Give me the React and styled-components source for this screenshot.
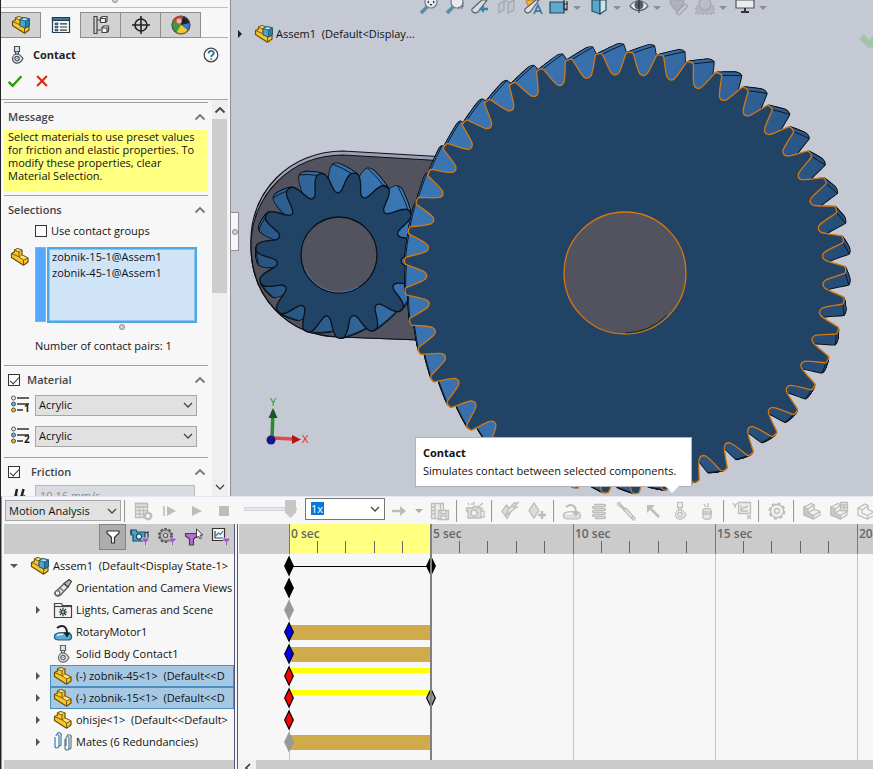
import React from "react";
import styled, { createGlobalStyle, css } from "styled-components";

const GlobalStyle = createGlobalStyle`
  * { box-sizing: border-box; }
  body {
    margin: 0;
    background: #f7f7f7;
    color: #111;
    font: 11px/16px "Open Sans", "Noto Sans", sans-serif;
  }
  button, input, select { font: inherit; color: inherit; margin: 0; }
  button { padding: 0; border: 0; background: none; }
  h2, h3, p, ul { margin: 0; padding: 0; font: inherit; }
  ul { list-style: none; }
  svg { display: block; flex: none; }
`;

/* ---------- layout ---------- */

const Window = styled.div`
  display: flex;
  flex-direction: column;
  height: 100vh;
  overflow: hidden;
  border-left: 1px solid #222228;
`;

const Workspace = styled.main`
  display: flex;
  flex: 1;
  min-height: 0;
`;

const Sidebar = styled.aside`
  display: flex;
  flex-direction: column;
  flex: none;
  width: 230px;
  background: #f7f7f7;
  border-right: 1px solid #8d8f99;
`;

const Grip = styled.div`
  display: flex;
  justify-content: center;
  height: 8px;
  margin-right: 2px;
  border-bottom: 1px solid #c0c0c0;
`;

const Tabs = styled.nav`
  display: flex;
  height: 26px;
  margin: 4px 2px 0 0;
  border-bottom: 1px solid #b0b0b0;
`;

const Tab = styled.button`
  display: flex;
  align-items: center;
  justify-content: center;
  width: 40px;
  height: 26px;
  background: ${(p) => (p.$active ? "#f7f7f7" : "#d2d2d2")};
  border: solid #8e8e8e;
  border-width: ${(p) => (p.$active ? "0" : "1px 1px 1px 0")};
  border-right-width: 1px;
`;

const PanelHeader = styled.header`
  padding: 8px 9px 0 6px;
  height: 62px;
  margin-right: 2px;
  border-bottom: 1px solid #a8a8a8;
`;

const TitleRow = styled.div`
  display: flex;
  align-items: center;
  height: 18px;
  gap: 6px;
`;

const PanelTitle = styled.h2`
  flex: 1;
  font-size: 11px;
  font-weight: 700;
  color: #222;
`;

const ActionRow = styled.div`
  display: flex;
  gap: 12px;
  margin-top: 8px;
`;

const PanelScroll = styled.div`
  display: flex;
  flex: 1;
  min-height: 0;
  padding-right: 2px;
`;

const PanelBody = styled.div`
  flex: 1;
  min-width: 0;
  overflow: hidden;
  padding: 2px 4px 0 3px;
`;

const Section = styled.section`
  border-top: 1px solid #a0a0a0;
  padding-bottom: ${(p) => p.$bottom || 3}px;
`;

const SectionHead = styled.div`
  display: flex;
  align-items: center;
  height: 27px;
  padding: 0 2px 0 4px;
  margin-bottom: ${(p) => p.$gap || 0}px;
  font-weight: 600;
  color: #444;
  > :last-child { margin-left: auto; }
`;

const Note = styled.p`
  height: 62px;
  padding: 0 4px;
  background: #ffff80;
  line-height: 13px;
`;

const FieldRow = styled.div`
  display: grid;
  grid-template-columns: 31px 162px;
  align-items: ${(p) => p.$align || "center"};
  margin-bottom: ${(p) => p.$gap || 0}px;
`;

const Lead = styled.span`
  padding-left: 6px;
`;

const CheckLabel = styled.label`
  display: flex;
  align-items: center;
  gap: ${(p) => p.$gap || 4}px;
`;

const TickBox = styled.input.attrs({ type: "checkbox" })`
  appearance: none;
  flex: none;
  width: 12px;
  height: 12px;
  border: 1px solid #333;
  background: #fff;
  &:checked::after {
    content: "";
    display: block;
    width: 8px;
    height: 4px;
    margin: 2px 1px;
    border: solid #333;
    border-width: 0 0 1px 1px;
    transform: rotate(-48deg);
  }
`;

const Selection = styled.div`
  display: flex;
  gap: 1px;
`;

const ColorStrip = styled.span`
  width: 11px;
  height: 75px;
  background: #56a8ff;
  border: 1px solid #8eaed0;
`;

const PickList = styled.ul`
  flex: 1;
  height: 76px;
  padding: 0 3px;
  border: 2px solid #4ea9e0;
  box-shadow: inset 0 0 0 1px #8cc3ea;
  background: #d0e4f7;
`;

const Select = styled.select`
  appearance: none;
  height: 21px;
  width: 100%;
  padding: 0 22px 0 3px;
  border: 1px solid #a6a6a6;
  border-radius: 0;
  background: #e1e1e1;
  color: #111;
`;

const SelectWrap = styled.span`
  display: grid;
  flex: none;
  align-items: center;
  width: ${(p) => p.$width || "100%"};
  > * { grid-area: 1 / 1; }
  > svg { justify-self: end; margin-right: 3px; pointer-events: none; }
`;

const Velocity = styled.input`
  height: 21px;
  width: 160px;
  padding: 0 4px;
  border: 1px solid #b8b8b8;
  background: #d8dce2;
  color: #8d8d8d;
`;

const Dot = styled.span`
  flex: none;
  width: 6px;
  height: 6px;
  border-radius: 50%;
  border: 1px solid #8a8a8a;
  background: #d4d4d4;
  margin: ${(p) => p.$margin || 0};
`;

const PairCount = styled.p`
  padding: 8px 0 0 31px;
  height: 32px;
`;

const ScrollTrack = styled.div`
  display: flex;
  flex-direction: column;
  width: 16px;
  padding-right: 1px;
  background: #efefef;
`;

const ScrollButton = styled.button`
  display: grid;
  place-items: center;
  height: 19px;
`;

const ScrollThumb = styled.div`
  flex: 0 0 174px;
  margin-bottom: auto;
  background: #cdcdcd;
`;

/* ---------- graphics area ---------- */

const Viewport = styled.section`
  position: relative;
  flex: 1;
  min-width: 0;
  overflow: hidden;
  background: #c5c9d4;
`;

const Scene = styled.svg`
  width: 100%;
  height: 100%;
`;

const ViewTools = styled.div`
  position: absolute;
  top: 0;
  left: 187px;
  display: flex;
  gap: 4px;
`;

const ViewTool = styled.button`
  display: flex;
  height: 16px;
  align-items: center;
`;

const Caret = styled.span`
  margin: ${(p) => p.$margin || "0 3px"};
  border: solid transparent;
  border-width: 4px 4px 0;
  border-top-color: ${(p) => p.$color || "#8d8f98"};
`;

const FlyoutTree = styled.button`
  position: absolute;
  left: 5px;
  top: 24px;
  display: flex;
  align-items: center;
`;

const FlyoutLabel = styled.span`
  display: flex;
  align-items: center;
  gap: 2px;
  padding-left: 10px;
`;

const PanelHandle = styled.button`
  position: absolute;
  left: 0;
  top: 212px;
  display: grid;
  place-items: center;
  width: 8px;
  height: 39px;
  background: #f7f7f7;
  border: 1px solid #8d8f99;
  border-left: 0;
`;

const Tip = styled.div`
  position: absolute;
  left: 184px;
  bottom: 9px;
  min-width: 277px;
  padding: 6px 7px 7px;
  height: 50px;
  background: #fff;
  border: 1px solid #b0b3bb;
  line-height: 18px;
  white-space: nowrap;
  &::after {
    content: "";
    position: absolute;
    right: 12px;
    top: 100%;
    border: solid transparent;
    border-width: 7px 7px 0;
    border-top-color: #fff;
  }
`;

/* ---------- motion study ---------- */

const MotionStudy = styled.section`
  flex: none;
  border-top: 1px solid #e6e6f2;
  border-left: 1px solid #7f9497;
`;

const MotionBar = styled.div`
  display: flex;
  align-items: center;
  height: 27px;
  padding-left: 3px;
  overflow: hidden;
  background: #f7f7f7;
`;

const ToolButton = styled.button`
  display: grid;
  place-items: center;
  flex: none;
  width: ${(p) => p.$width || 27}px;
  height: 24px;
`;

const Divider = styled.span`
  flex: none;
  width: 2px;
  height: 22px;
  margin: 0 3px;
  background: #9a9a9a;
  border-right: 1px solid #f0f0f0;
`;

const Speed = styled.input.attrs({ type: "range" })`
  appearance: none;
  flex: none;
  width: 53px;
  height: 20px;
  margin: 0 8px 3px 7px;
  background: none;
  &::-webkit-slider-runnable-track {
    height: 4px;
    background: #e4e8e8;
    border: 1px solid #d2d6d6;
  }
  &::-webkit-slider-thumb {
    appearance: none;
    width: 11px;
    height: 18px;
    margin-top: -8px;
    background: #c6c6c6;
    clip-path: polygon(0 0, 100% 0, 100% 70%, 50% 100%, 0 70%);
  }
`;

const Combo = styled.span`
  display: flex;
  align-items: center;
  justify-content: space-between;
  flex: none;
  width: 80px;
  height: 22px;
  margin-bottom: 4px;
  padding: 0 3px 0 5px;
  background: #fff;
  border: 1px solid #777;
`;

const ComboText = styled.input`
  width: 13px;
  height: 13px;
  padding: 0;
  border: 0;
  background: #0878d8;
  color: #fff;
  line-height: 13px;
`;

const StudyBody = styled.div`
  display: grid;
  grid-template-columns: 232px 5px minmax(0, 1fr);
`;

const TreePane = styled.div`
  padding-left: 2px;
  overflow: hidden;
`;

const FilterBar = styled.div`
  display: flex;
  justify-content: flex-end;
  height: 30px;
  background: #cbcbcb;
`;

const FilterButton = styled.button`
  display: grid;
  place-items: center;
  width: 27px;
  height: 26px;
  ${(p) => p.$on && css`
    background: #adadad;
    border: 1px solid #858585;
  `}
`;

const Tree = styled.ul`
  height: 206px;
  padding-top: 1px;
  overflow: hidden;
`;

const TreeRow = styled.li`
  display: flex;
  align-items: center;
  height: 22px;
  padding-left: ${(p) => (p.$root ? 5 : 29)}px;
  white-space: pre;
`;

const Twisty = styled.button`
  display: grid;
  place-items: center;
  flex: none;
  width: 10px;
  height: 16px;
  visibility: ${(p) => (p.$hidden ? "hidden" : "visible")};
`;

const NodeLabel = styled.span`
  display: flex;
  align-items: center;
  gap: 3px;
  flex: 1 0 auto;
  height: 22px;
  margin-left: ${(p) => (p.$root ? 8 : 7)}px;
  padding-left: 2px;
  border: 1px solid transparent;
  ${(p) => p.$selected && css`
    background: #a6c8e3;
    border-color: #4a8fbd;
  `}
`;

const BottomBar = styled.div`
  display: flex;
  align-items: center;
  height: 9px;
  overflow: hidden;
  background: #cbcbcb;
`;

const ScrollCorner = styled.button`
  display: grid;
  place-items: center;
  flex: none;
  width: 17px;
  height: 9px;
  background: #f0f0f0;
`;

const Splitter = styled.div`
  background: #f7f7f7;
  border: solid #55557c;
  border-width: 0 1px;
  margin-right: 1px;
`;

const Timeline = styled.div`
  position: relative;
  overflow: hidden;
`;

const Ruler = styled.div`
  display: flex;
  height: 30px;
  padding-left: 50px;
  background: #cbcbcb;
  color: #666;
  font-size: 12px;
  font-weight: 600;
`;

const Span = styled.div`
  flex: none;
  display: grid;
  grid-template-columns: repeat(5, 1fr);
  grid-template-rows: 14px 15px;
  width: 142px;
  height: 30px;
  border-left: 1px solid #777;
  ${(p) => p.$active && css`
    background: #ffff80;
  `}
`;

const SpanLabel = styled.span`
  grid-column: 1 / -1;
  padding: 2px 0 0 1px;
  line-height: 16px;
`;

const Tick = styled.i`
  margin-top: 3px;
  border-right: 1px solid #666;
  &:last-child { border: 0; }
`;

const Tracks = styled.div`
  height: 206px;
  padding: 1px 0 0 50px;
  background:
    repeating-linear-gradient(90deg, #c4c4c4 0 1px, transparent 1px 142px) 50px 0 no-repeat,
    #f7f7f7;
`;

const Track = styled.div`
  position: relative;
  display: flex;
  align-items: ${(p) => (p.$kind === "thin" ? "flex-start" : "center")};
  height: 22px;
`;

const Bar = styled.div`
  width: 142px;
  height: ${(p) => ({ full: 15, thin: 5, line: 1 })[p.$kind]}px;
  margin-top: ${(p) => (p.$kind === "thin" ? 3 : 0)}px;
  background: ${(p) => ({ full: "#cfab4b", thin: "#ffff00", line: "#000" })[p.$kind]};
`;

const Key = styled.svg`
  position: absolute;
  top: 1px;
  left: ${(p) => (p.$end ? 137 : -5)}px;
`;

const Playhead = styled.div`
  position: absolute;
  left: 191px;
  top: 0;
  bottom: 9px;
  width: 2px;
  background: #808080;
`;

/* ---------- icons ---------- */

const Icon = ({ size = 20, box = "0 0 20 20", h, children }) => (
  <svg width={size} height={h || size} viewBox={box} fill="none" stroke="#444" strokeWidth="1.2" aria-hidden="true">
    {children}
  </svg>
);

const Part = ({ cube }) => (
  <Icon>
    <path d="M1.500 6.500l3-1.500V3l3-1.500L12 3v5l6 3v4l-4.500 3.200L1.500 10.500z" fill="#f7c72a" stroke="#6b4d0c" strokeLinejoin="round" />
    <path d="M4.500 3.200L9 4.800v5l4.500 3v5M1.500 6.500L9 9.800M13.500 12.800L18 11" stroke="#6b4d0c" strokeWidth=".9" />
    <path d="M4.500 3.200L7.500 1.600 12 3 9 4.700zM9 9.800L12 8l6 3-4.500 1.800z" fill="#ffe682" stroke="#6b4d0c" strokeWidth=".6" />
    {cube && (
      <g stroke="#1f5674" strokeWidth=".9" strokeLinejoin="round">
        <path d="M9 4.500l4-2 5.500 1.500v6.500l-4 2.500L9 11z" fill="#4fa3cc" />
        <path d="M9 4.500l4-2 5.500 1.500-4 2z" fill="#b9e2f4" />
        <path d="M14.500 6l4-2v6.500l-4 2.500z" fill="#2b7fae" />
      </g>
    )}
  </Icon>
);

const ContactIcon = ({ c = "#4a4f5c", f = "#dfe3ea" }) => (
  <Icon>
    <path d="M7.500 1.500h5v5h-5zM8.500 6.500h3V9h-3z" fill={f} stroke={c} />
    <path d="M5.500 13.500c0-2.500 2-4.500 4.500-4.500 2.500 0 4 1.500 6 4.500-1.500 3-3.500 4.700-6 4.700s-4.500-2-4.500-4.700z" fill={f} stroke={c} />
    <circle cx="10" cy="13.500" r="2.200" fill="#fff" stroke={c} />
    <circle cx="10" cy="13.500" r=".7" fill={c} stroke="none" />
  </Icon>
);

const MotorIcon = ({ grey }) => (
  <Icon>
    <path d="M1.500 14c0-2.200 3-3.500 8.500-3.500s8.500 1.300 8.500 3.500v1.500c0 1.500-2 2.500-4 2.500H6c-3 0-4.500-1-4.500-2.500z" fill={grey ? "#dedede" : "#58aed8"} stroke={grey ? "#bcbcbc" : "#235a78"} />
    <path d="M4 13.500c2-1 4-1.200 6-1.200" stroke="#fff" />
    <path d="M4 6c5-4 10-2 10 5.500" stroke={grey ? "#bbb" : "#222"} strokeWidth="2" />
    <path d="M10.500 10.500h7L14 15.500z" fill={grey ? "#bbb" : "#222"} stroke="none" />
  </Icon>
);

const Chevron = ({ up, color = "#444", size = 12 }) => (
  <svg width={size} height={size} viewBox="0 0 12 12" fill="none" stroke={color} strokeWidth={up ? 1.8 : 1.3} aria-hidden="true">
    <path d={up ? "M1.500 8.500L6 4l4.500 4.500" : "M2 4l4 4 4-4"} />
  </svg>
);

const Triangle = ({ open, color = "#555" }) => (
  <svg width="8" height="8" viewBox="0 0 8 8" aria-hidden="true">
    <path d={open ? "M0 2h8L4 6z" : "M2 0l4 4-4 4z"} fill={color} />
  </svg>
);

const PropertyIcon = () => (
  <Icon>
    <path d="M1.500 2.500h17v15h-17z" fill="#f4f8fa" stroke="#223c4c" />
    <path d="M1.500 2.500h17v3h-17z" fill="#2c7aa5" stroke="#223c4c" />
    <path d="M4 8h3v1.500H4zM4 11.200h3v1.500H4zM4 14.400h3v1.500H4z" fill="#3e98c5" stroke="#234" strokeWidth=".7" />
    <path d="M9 8.800h7M9 12h7M9 15.200h7" stroke="#333" />
  </Icon>
);

const ConfigIcon = () => (
  <Icon>
    <path d="M3 1.500h3v17H3zM6 5h4M6 15h4" stroke="#444" />
    <path d="M9.500 3l2-1.500h4.500V6l-1.500 1.500H9.500zM11 12.500l2-1.500h4.500v5L16 17.500h-5z" fill="#f4f4f4" />
    <path d="M9.500 3.500h5v4M11 13h5v4" />
  </Icon>
);

const TargetIcon = () => (
  <Icon>
    <circle cx="10" cy="10" r="6" stroke="#222" strokeWidth="1.600" />
    <path d="M10 1v18M1 10h18" stroke="#222" strokeWidth="1.600" />
  </Icon>
);

const BallIcon = () => (
  <Icon>
    <circle cx="10" cy="10" r="9" fill="#3a78d0" />
    <path d="M10 10L2 5.500A9 9 0 0 1 12 1.200z" fill="#e2432d" stroke="none" />
    <path d="M10 10l2-8.800A9 9 0 0 1 18.500 8z" fill="#222" stroke="none" />
    <path d="M10 10L2 5.500A9 9 0 0 0 5.500 17.500z" fill="#3f9a3a" stroke="none" />
    <path d="M10 10l-4.500 7.500A9 9 0 0 0 17 15.500z" fill="#f5c92c" stroke="none" />
    <circle cx="8" cy="6" r="2.500" fill="#fff" opacity=".6" stroke="none" />
    <circle cx="10" cy="10" r="8.700" stroke="#555" strokeWidth=".8" />
  </Icon>
);

const MaterialIcon = ({ n }) => (
  <svg width="22" height="22" viewBox="0 0 22 22" aria-hidden="true">
    <path d="M7 4h12M7 10h12M7 16h6" stroke="#333" strokeWidth="1.600" />
    <g stroke="#444" strokeWidth=".9">
      <circle cx="3.500" cy="4" r="2" fill="#eee" />
      <circle cx="3.500" cy="10" r="2" fill="#5fb4dc" />
      <circle cx="3.500" cy="16" r="2" fill="#f2b90d" />
    </g>
    <text x="14" y="18" fontSize="10" fontWeight="700" fill="#222">{n}</text>
  </svg>
);

const Funnel = ({ fill = "#fff", stroke = "#333" }) => (
  <Icon>
    <path d="M4 4h12v2l-4.500 4.500V16h-3v-5.500L4 6z" fill={fill} stroke={stroke} strokeLinejoin="round" />
  </Icon>
);

const MiniFunnel = () => <path d="M12 11h7v2l-2.500 2v4h-2v-4L12 13z" fill="#a45cc0" stroke="#fff" strokeWidth=".5" />;

const filterIcons = {
  "Filter animated": (
    <Icon>
      <path d="M1 3h5l1 2h8v9H3V8H1z" fill="#4aa3c9" stroke="#174c66" />
      <circle cx="9" cy="9.500" r="2.600" fill="#e8f4fa" stroke="#174c66" />
      <path d="M15 6l3-1v6M1 3v4" stroke="#333" />
      <MiniFunnel />
    </Icon>
  ),
  "Filter driving": (
    <Icon>
      <circle cx="8.500" cy="8.500" r="6.500" fill="#b9b9b9" stroke="#555" strokeWidth="2" strokeDasharray="2.500 1.600" />
      <circle cx="8.500" cy="8.500" r="5.500" fill="#b9b9b9" stroke="#666" />
      <circle cx="8.500" cy="8.500" r="2" fill="#eee" stroke="#555" />
      <MiniFunnel />
    </Icon>
  ),
  "Filter selected": (
    <Icon>
      <path d="M1.500 6.500h12v2.500L9.500 12v6h-4v-6l-4-3z" fill="#b06fd0" stroke="#5b2a7a" />
      <path d="M12.500 2v9l2-2 1.500 3 1.500-1-1.500-3h3z" fill="#fff" stroke="#333" strokeWidth=".9" />
    </Icon>
  ),
  "Filter results": (
    <Icon>
      <path d="M1.500 1.500h12v12h-12z" fill="#f4f6f7" stroke="#333" />
      <path d="M4 4v7h8" />
      <path d="M4.500 9l3-3 2 1.500L12 4" stroke="#2a7da8" />
      <MiniFunnel />
    </Icon>
  ),
};

const CameraPen = () => (
  <Icon>
    <path d="M2 14.500l9-9 4 3.500-8 8.500c-2 1.500-6 0-5-3z" fill="#e4e4e4" stroke="#555" />
    <path d="M11 5.500l5-4 2.500 2-3.500 5.500z" fill="#b5b5b5" stroke="#444" />
    <circle cx="4.500" cy="15" r="2.300" fill="#fff" stroke="#666" />
    <path d="M7 10l4 3.500" stroke="#777" />
  </Icon>
);

const LightsIcon = () => (
  <Icon>
    <path d="M1.500 3.500h7l1 2h9v12h-17z" fill="#f3f3f3" stroke="#444" />
    <path d="M1.500 6.500h17" />
    <circle cx="10" cy="12" r="2" fill="#79c3e6" stroke="#222" />
    <path d="M10 7.800v1.500M10 14.700v1.500M5.800 12h1.500M12.700 12h1.500M7 9l1 1M13 9l-1 1M7 15l1-1M13 15l-1-1" stroke="#222" />
  </Icon>
);

const MatesIcon = () => (
  <Icon>
    <path d="M2 5v9a2 2 0 0 0 4 0V4a1.500 1.500 0 0 0-3 0M8 3v10a2 2 0 0 1-2 1M8 13V4a2 2 0 0 0-4-2" stroke="#3c81a6" />
    <path d="M12 7v9a2 2 0 0 0 4 0V6a1.500 1.500 0 0 0-3 0v8M18 5v10a2 2 0 0 1-2 2M18 6a2 2 0 0 0-4-2" stroke="#5d7c8c" />
  </Icon>
);

const G = "#bdbdbd";
const g = "#dcdcdc";
const Dull = ({ children }) => (
  <svg width="20" height="20" viewBox="0 0 20 20" fill="none" stroke={G} strokeWidth="1.300" aria-hidden="true">{children}</svg>
);
const Cube = () => (
  <>
    <path d="M2 6l7-3.500 3 1.500v4l6 2.500V14l-6.500 4L2 14z" fill="#efefef" />
    <path d="M2 6l4 2v4l5.500 2.500V18L2 14z" fill="#c9c9c9" />
    <path d="M6 8l6-4M6 12l6-3.500M11.500 14.500L18 10.500" />
  </>
);

const motionIcons = {
  Calculate: <Dull><path d="M2.500 2.500h12v14h-12zM2.500 6h12M2.500 9.500h12M2.500 13h12M6.500 6v10M10.500 6v10" fill="#ececec" /><path d="M2.500 2.500h12V6h-12z" fill={g} /><circle cx="15" cy="15" r="3" fill="#f7f7f7" strokeWidth="2" /><circle cx="15" cy="15" r="4" strokeDasharray="1.500 1.600" /></Dull>,
  "Play from start": <Dull><path d="M4 5v10" strokeWidth="1.600" /><path d="M7 5l9 5-9 5z" fill={G} stroke="none" /></Dull>,
  Play: <Dull><path d="M5 5l10 5-10 5z" fill={G} stroke="none" /></Dull>,
  Stop: <Dull><path d="M5 5h10v10H5z" fill={G} stroke="none" /></Dull>,
  "Playback mode": <Dull><path d="M3 10h9" strokeWidth="2.500" /><path d="M11 5l6 5-6 5z" fill={G} stroke="none" /></Dull>,
  "Save animation": <Dull><path d="M1.500 2.500h12v15h-12zM5 2.500v15M10.500 2.500v6M1.500 6H5M1.500 9.500H5M1.500 13H5" fill="#ececec" /><path d="M8.500 9.500h10v9h-10z" fill={g} /><path d="M11 9.500h5v3h-5zM11 15h5v3.500h-5z" fill="#f7f7f7" /></Dull>,
  "Animation wizard": <Dull><path d="M1.500 7h6l1-1.500h4L13 7h3v10H3v-7H1.500z" fill={g} /><circle cx="9" cy="12" r="3" fill="#f2f2f2" /><path d="M12 7l6-5M3 2l1 2M9 1v3M6 3h2M17 7l1 1M16 10h3v6h-3" /></Dull>,
  "Auto key": <Dull><path d="M6.500 4l5 6-4.500 7.500L2 10z" fill={g} /><path d="M8 9l6-7h4l-5 4h4L6 14l2-5z" fill="#ececec" /></Dull>,
  "Add key": <Dull><path d="M7 2l5 7.500L7 17 2 9.500z" fill={g} /><path d="M15 10v8M11 14h8" strokeWidth="2.500" /></Dull>,
  Motor: <MotorIcon grey />,
  Spring: <Dull><path d="M5 3.500h10c2 0 2 2 0 2H5c-2 0-2 2 0 2h10c2 0 2 2 0 2H5c-2 0-2 2 0 2h10c2 0 2 2 0 2H5c-2 0-2 2 0 2h10c2 0 2 2 0 2H6" /></Dull>,
  Damper: <Dull><circle cx="3" cy="3" r="1.500" /><path d="M4 4l6 6" strokeWidth="3" /><path d="M8 9l2-2 7 8-2 2z" fill="#eee" /><circle cx="17.500" cy="17.500" r="1.500" /></Dull>,
  Force: <Dull><path d="M16 16L8 8" strokeWidth="2.500" /><path d="M4 4h8L4 12z" fill={G} stroke="none" /></Dull>,
  Contact: <ContactIcon c={G} f="#ececec" />,
  Gravity: <Dull><path d="M6 9c0-2 8-2 8 0v7c0 3-8 3-8 0z" fill="#e8e8e8" /><path d="M6 11h8v2H6z" fill="#fff" /><path d="M7 3l2 3M11 2v4" /></Dull>,
  "Results and plots": <Dull><path d="M1 2l2 3 2-3M3 5v2M15 14l4 4M19 14l-4 4" /><path d="M6.500 1.500h12v11h-12z" fill="#eee" /><path d="M9 4v6h7M9 9l3-3 1.500 1L16 4" /></Dull>,
  "Study properties": <Dull><circle cx="10" cy="10" r="7.500" strokeDasharray="3.300 2.600" strokeWidth="2" /><circle cx="10" cy="10" r="6.500" fill="#f2f2f2" /><circle cx="10" cy="10" r="2.500" /></Dull>,
  "Simulation setup": <Dull><Cube /></Dull>,
  "Calculate simulation": <Dull><Cube /><path d="M11.500 1.500h7v8h-7zM11.500 4h7M11.500 6.500h7M15 4v5" fill="#eee" /></Dull>,
  "Finite element results": <Dull><path d="M2 7l7-4 3 1.500v4l6 2.500v3.500L11.500 18 2 14zM2 7l4 2 6-4M6 9v3l5.500 2.500V18M11.500 14.500L18 11" fill="#f6f6f6" /></Dull>,
};

const VI = ({ children, dim }) => (
  <svg width="22" height="16" viewBox="0 0 22 16" fill="none" stroke="#5b626e" strokeWidth="1.200" opacity={dim ? 0.35 : 1} aria-hidden="true">{children}</svg>
);
const Lens = () => (
  <>
    <path d="M9 7L3 13" stroke="#4f8fae" strokeWidth="3.500" />
    <circle cx="13" cy="2" r="6" fill="#e5ebee" stroke="#747c85" />
  </>
);
const viewTools = [
  { label: "Zoom to fit", icon: <VI><Lens /><path d="M9 2l2-1.500v3zM17 2l-2-1.500v3zM13 6l-1.500-2h3z" fill="#333" stroke="none" /></VI> },
  { label: "Zoom to area", icon: <VI><Lens /><path d="M14 8h5V3" strokeDasharray="2 1" /></VI> },
  { label: "Previous view", icon: <VI><path d="M2 9L12 0h5L8 12c-3 2-7 0-6-3z" fill="#d9dde0" /><path d="M18 9h-5" stroke="#3b83ab" strokeWidth="2.500" /><path d="M9 9l5-4v8z" fill="#3b83ab" stroke="none" /></VI> },
  { label: "Section view", icon: <VI dim><path d="M3 4l5-3v9l-5 3zM12 3l6-3v10l-6 3zM8 1h4" fill="#bbb" /></VI> },
  { label: "Dynamic annotation", icon: <VI><path d="M4 1l6-1 3 2-6 6z" fill="#f2b830" stroke="#c98a1a" /><path d="M3 9L14 0h3L8 12c-3 2-6 0-5-3z" fill="#dfe2e4" /><path d="M12 14l4-9 4 9M13.500 11h5" stroke="#3b7fa4" strokeWidth="1.800" /></VI> },
  { label: "View orientation", menu: true, icon: <VI><path d="M2 2h14v11H2z" fill="#5fa9cc" stroke="#214a60" /><path d="M16 0v9h3V1M16 4h4M19 1v9h-3" stroke="#333" /></VI> },
  { label: "Display style", menu: true, icon: <VI><path d="M4 0h8v14l-8-3z" fill="#5ba7ca" stroke="#28536a" /><path d="M12 14l6-4V0h-6z" fill="#cfe3ec" stroke="#28536a" /></VI> },
  { label: "Hide/show items", menu: true, icon: <VI><path d="M2 6c5-7 13-7 18 0-5 6-13 6-18 0z" fill="#eceff1" /><circle cx="11" cy="5" r="4" fill="#555b63" /><path d="M11 0v13" stroke="#333" /></VI> },
  { label: "Edit appearance", icon: <VI dim><path d="M2 0c0 5 4 9 7 11 4-3 7-6 7-11z" fill="#888" /><path d="M8 13l9-9 3 2-9 9z" fill="#ccc" /></VI> },
  { label: "Apply scene", menu: true, icon: <VI dim><path d="M2 6h18v8H2z" fill="#999" strokeDasharray="2 2" /><circle cx="11" cy="4" r="6" fill="#aaa" /></VI> },
  { label: "View settings", menu: true, icon: <VI><path d="M2 0h18v8H2z" fill="#e9ecee" stroke="#555" /><path d="M11 8v4M7 12h8" stroke="#333" strokeWidth="2" /></VI> },
];

/* ---------- gear model ---------- */

const polar = (cx, cy, r, deg) => {
  const a = (deg * Math.PI) / 180;
  return `${(cx + r * Math.sin(a)).toFixed(2)} ${(cy - r * Math.cos(a)).toFixed(2)}`;
};

function gearPath({ cx, cy, teeth, tip, root, start, tipHalf, baseHalf, low, high }) {
  const pitch = 360 / teeth;
  let d = "";
  for (let i = 0; i < teeth; i++) {
    const a = start + i * pitch;
    const at = (r, off) => polar(cx, cy, r, a + off);
    d += `${i ? "L" : "M"}${at(root + 1, -baseHalf)}`;
    d += `C${at(root + low[0], -low[1])} ${at(tip - high[0], -high[1])} ${at(tip - 1, -tipHalf)}`;
    d += `Q${at(tip + 0.6, 0)} ${at(tip - 1, tipHalf)}`;
    d += `C${at(tip - high[0], high[1])} ${at(root + low[0], low[1])} ${at(root + 1, baseHalf)}`;
    d += `Q${at(root - 2.5, pitch / 2)} ${at(root + 1, pitch - baseHalf)}`;
  }
  return `${d}Z`;
}

const LAYERS = 14;
const bigGear = { cx: 394, cy: 273, teeth: 45, tip: 221, root: 199, start: 1.2, tipHalf: 0.9, baseHalf: 3, low: [5, 2.2], high: [8, 1.6] };
const smallGear = { cx: 108, cy: 255, teeth: 15, tip: 83.5, root: 63, start: 11, tipHalf: 2.4, baseHalf: 9.2, low: [6, 6.4], high: [5, 6.2] };

function Gear({ gear, shift, twist, bore, edge, shade }) {
  const layers = Array.from({ length: LAYERS }, (_, i) => {
    const t = 1 - i / LAYERS;
    return gearPath({ ...gear, cx: gear.cx + shift[0] * t, cy: gear.cy + shift[1] * t, tip: gear.tip + 1.5 * t, start: gear.start + twist * t });
  });
  const side = Math.sign(twist);
  const lands = Array.from({ length: gear.teeth }, (_, i) => {
    const a = gear.start + (i * 360) / gear.teeth;
    const points = [0, 0.5, 1].map((t) =>
      polar(gear.cx + shift[0] * t, gear.cy + shift[1] * t, gear.tip - 1 + 1.5 * t, a + side * gear.tipHalf + twist * t)
    );
    return `M${points.join("L")}`;
  }).join("");
  return (
    <g strokeLinejoin="round">
      {layers.map((d, i) => <path key={i} d={d} stroke="#0b1118" strokeWidth="1.800" fill="none" />)}
      {layers.map((d, i) => <path key={i} d={d} fill={`url(#${shade})`} />)}
      <path d={lands} fill="none" stroke="#0b1118" strokeWidth=".9" />
      <path d={gearPath(gear)} fill="#214365" stroke={edge} strokeWidth="1.300" />
      <circle cx={gear.cx} cy={gear.cy} r={bore} fill="#53535f" stroke={edge} strokeWidth="1.300" />
    </g>
  );
}

const Model = () => (
  <Scene viewBox="0 0 642 496" preserveAspectRatio="xMinYMin slice" role="img" aria-label="Gear assembly">
    <defs>
      <linearGradient id="steel" gradientUnits="userSpaceOnUse" x1="170" y1="120" x2="600" y2="260">
        <stop offset="0" stopColor="#3b78b7" />
        <stop offset=".5" stopColor="#366ca8" />
        <stop offset="1" stopColor="#264d78" />
      </linearGradient>
      <linearGradient id="steelSmall" gradientUnits="userSpaceOnUse" x1="25" y1="260" x2="180" y2="200">
        <stop offset="0" stopColor="#28547f" />
        <stop offset="1" stopColor="#3c7aba" />
      </linearGradient>
    </defs>
    <path d="M20 246C18 190 60 151 112 151L215 157V341L109 337C55 336 20 296 20 246z" fill="#9ba0b8" stroke="#111" strokeWidth="1.200" />
    <path d="M20 246C20 195 60 155 112 155L215 161V341L109 337C55 336 20 296 20 246z" fill="#53535f" stroke="#111" strokeWidth="1.200" />
    <Gear gear={smallGear} shift={[2, -7]} twist={-14.1} bore={38} edge="#0b1118" shade="steelSmall" />
    <path d="M74 269A37 37 0 0 0 127 287" fill="none" stroke="#3c7aba" strokeWidth="1" />
    <Gear gear={bigGear} shift={[3, -7]} twist={4.7} bore={61} edge="#d5780f" shade="steel" />
    <path d="M394 333A60 60 0 0 0 436 315" fill="none" stroke="#111" strokeWidth=".8" />
    <path d="M628 39l5-5 5 6 8-8v14l-8 2z" fill="#a3c4a8" />
    <g>
      <path d="M41 438l1-27" stroke="#2a8a35" strokeWidth="3.500" />
      <path d="M42 408l-4.500 10h9z" fill="#155c1e" />
      <path d="M42 438l20 1" stroke="#e24a4a" strokeWidth="3.500" />
      <path d="M70 439.500l-9-4.500v9z" fill="#b31515" />
      <circle cx="40" cy="440" r="4.500" fill="#17176b" />
      <path d="M38 437h4l-4 6h4" fill="none" stroke="#1818e0" />
      <text x="39" y="406" fontSize="11" fill="#1c9a28">Y</text>
      <text x="71" y="443" fontSize="11" fill="#e22">X</text>
    </g>
  </Scene>
);

/* ---------- data ---------- */

const tree = [
  { label: "Assem1  (Default<Display State-1>", icon: <Part cube />, root: true, open: true, bar: "line", start: "#000", end: "#000" },
  { label: "Orientation and Camera Views", icon: <CameraPen />, leaf: true, start: "#000" },
  { label: "Lights, Cameras and Scene", icon: <LightsIcon />, start: "#999", plain: true },
  { label: "RotaryMotor1", icon: <MotorIcon />, leaf: true, bar: "full", start: "#00f" },
  { label: "Solid Body Contact1", icon: <ContactIcon c="#666" />, leaf: true, bar: "full", start: "#00f" },
  { label: "(-) zobnik-45<1>  (Default<<D", icon: <Part />, selected: true, bar: "thin", start: "#f00" },
  { label: "(-) zobnik-15<1>  (Default<<D", icon: <Part />, selected: true, bar: "thin", start: "#f00", end: "#999" },
  { label: "ohisje<1>  (Default<<Default>", icon: <Part />, start: "#f00" },
  { label: "Mates (6 Redundancies)", icon: <MatesIcon />, bar: "full", start: "#999", plain: true },
];

const KeyMark = ({ color, end, plain }) => (
  <Key $end={end} width="10" height="20" viewBox="0 0 10 20" aria-hidden="true">
    <path d="M5 1l4.300 9L5 19 .7 10z" fill={color} stroke={plain ? color : "#000"} strokeWidth="1.200" />
  </Key>
);

const Tool = ({ name }) => <ToolButton aria-label={name}>{motionIcons[name]}</ToolButton>;

export default function App() {
  return (
    <Window>
      <GlobalStyle />
      <Workspace>
        <Sidebar>
          <Grip><Dot $margin="-3px 0 0" /></Grip>
          <Tabs>
            <Tab aria-label="Feature tree"><Part cube /></Tab>
            <Tab $active aria-label="Property manager"><PropertyIcon /></Tab>
            <Tab aria-label="Configurations"><ConfigIcon /></Tab>
            <Tab aria-label="Dimensions"><TargetIcon /></Tab>
            <Tab aria-label="Appearances"><BallIcon /></Tab>
          </Tabs>
          <PanelHeader>
            <TitleRow>
              <ContactIcon />
              <PanelTitle>Contact</PanelTitle>
              <button aria-label="Help">
                <Icon size={16}>
                  <circle cx="10" cy="10" r="8.500" fill="#fff" stroke="#444" strokeWidth="1.600" />
                  <path d="M7 8c0-4 6.500-4 6.500-.5 0 2.500-3.300 2.500-3.300 5M10.200 14v2" stroke="#2b6f96" strokeWidth="2.200" />
                </Icon>
              </button>
            </TitleRow>
            <ActionRow>
              <button aria-label="OK">
                <Icon size={16} h={18}><path d="M2 11l5 5L18 4" stroke="#2f9a0b" strokeWidth="3" /></Icon>
              </button>
              <button aria-label="Cancel">
                <Icon size={14} h={18}><path d="M3 3l14 14M17 3L3 17" stroke="#e02808" strokeWidth="3" /></Icon>
              </button>
            </ActionRow>
          </PanelHeader>
          <PanelScroll>
            <PanelBody>
              <Section>
                <SectionHead><h3>Message</h3><Chevron up color="#777" /></SectionHead>
                <Note>Select materials to use preset values for friction and elastic properties. To modify these properties, clear Material Selection.</Note>
              </Section>
              <Section>
                <SectionHead><h3>Selections</h3><Chevron up color="#777" /></SectionHead>
                <FieldRow $gap={8}>
                  <span />
                  <CheckLabel><TickBox /> Use contact groups</CheckLabel>
                </FieldRow>
                <FieldRow $align="start">
                  <Lead><Part /></Lead>
                  <Selection>
                    <ColorStrip />
                    <PickList aria-label="Selected components">
                      <li>zobnik-15-1@Assem1</li>
                      <li>zobnik-45-1@Assem1</li>
                    </PickList>
                  </Selection>
                  <span />
                  <Dot $margin="1px 0 0 84px" />
                </FieldRow>
                <PairCount>Number of contact pairs: 1</PairCount>
              </Section>
              <Section $bottom={1}>
                <SectionHead $gap={1}>
                  <CheckLabel $gap={7}><TickBox defaultChecked /> Material</CheckLabel>
                  <Chevron up color="#777" />
                </SectionHead>
                {[1, 2].map((n) => (
                  <FieldRow key={n} $gap={9}>
                    <Lead><MaterialIcon n={n} /></Lead>
                    <SelectWrap>
                      <Select aria-label={`Material ${n}`}><option>Acrylic</option></Select>
                      <Chevron />
                    </SelectWrap>
                  </FieldRow>
                ))}
              </Section>
              <Section>
                <SectionHead>
                  <CheckLabel $gap={11}><TickBox defaultChecked /> Friction</CheckLabel>
                  <Chevron up color="#777" />
                </SectionHead>
                <FieldRow>
                  <Lead><Icon><path d="M4 17L7 3M6 8c0 5 4 5 6 1l1.500-6M12.500 7c-1 4 0 5 3 3" stroke="#222" strokeWidth="2.500" /></Icon></Lead>
                  <Velocity aria-label="Friction velocity" disabled defaultValue="10.16 mm/s" />
                </FieldRow>
              </Section>
            </PanelBody>
            <ScrollTrack>
              <ScrollButton aria-label="Scroll up"><Chevron up /></ScrollButton>
              <ScrollThumb />
              <ScrollButton aria-label="Scroll down"><Chevron /></ScrollButton>
            </ScrollTrack>
          </PanelScroll>
        </Sidebar>

        <Viewport>
          <Model />
          <ViewTools>
            {viewTools.map((t) => (
              <ViewTool key={t.label} aria-label={t.label}>
                {t.icon}
                {t.menu && <Caret />}
              </ViewTool>
            ))}
          </ViewTools>
          <FlyoutTree>
            <Triangle color="#222" />
            <FlyoutLabel><Part cube />Assem1&nbsp; (Default&lt;Display...</FlyoutLabel>
          </FlyoutTree>
          <PanelHandle aria-label="Collapse panel"><Dot /></PanelHandle>
          <Tip role="tooltip">
            <b>Contact</b>
            <p>Simulates contact between selected components.</p>
          </Tip>
        </Viewport>
      </Workspace>

      <MotionStudy>
        <MotionBar>
          <SelectWrap $width="116px">
            <Select aria-label="Study type"><option>Motion Analysis</option></Select>
            <Chevron />
          </SelectWrap>
          <Divider />
          <Tool name="Calculate" />
          <Tool name="Play from start" />
          <Tool name="Play" />
          <Tool name="Stop" />
          <Speed aria-label="Playback position" defaultValue="100" />
          <Combo>
            <ComboText aria-label="Playback speed" defaultValue="1x" />
            <Chevron />
          </Combo>
          <Tool name="Playback mode" />
          <ToolButton $width={14} aria-label="Playback options"><Caret $margin="0" $color="#aaa" /></ToolButton>
          <Tool name="Save animation" />
          <Divider />
          <Tool name="Animation wizard" />
          <Divider />
          <Tool name="Auto key" />
          <Tool name="Add key" />
          <Divider />
          <Tool name="Motor" />
          <Tool name="Spring" />
          <Tool name="Damper" />
          <Tool name="Force" />
          <Tool name="Contact" />
          <Tool name="Gravity" />
          <Divider />
          <Tool name="Results and plots" />
          <Divider />
          <Tool name="Study properties" />
          <Divider />
          <Tool name="Simulation setup" />
          <Tool name="Calculate simulation" />
          <Tool name="Finite element results" />
        </MotionBar>

        <StudyBody>
          <TreePane>
            <FilterBar>
              <FilterButton $on aria-label="No filter"><Funnel /></FilterButton>
              {Object.entries(filterIcons).map(([name, icon]) => (
                <FilterButton key={name} aria-label={name}>{icon}</FilterButton>
              ))}
            </FilterBar>
            <Tree>
              {tree.map((n) => (
                <TreeRow key={n.label} $root={n.root}>
                  <Twisty $hidden={n.leaf} aria-label={`Toggle ${n.label}`}><Triangle open={n.open} /></Twisty>
                  <NodeLabel $root={n.root} $selected={n.selected}>{n.icon}{n.label}</NodeLabel>
                </TreeRow>
              ))}
            </Tree>
            <BottomBar />
          </TreePane>
          <Splitter />
          <Timeline>
            <Ruler>
              {[0, 5, 10, 15, 20].map((s) => (
                <Span key={s} $active={s === 0}>
                  <SpanLabel>{s} sec</SpanLabel>
                  <Tick /><Tick /><Tick /><Tick /><Tick />
                </Span>
              ))}
            </Ruler>
            <Tracks>
              {tree.map((n) => (
                <Track key={n.label} $kind={n.bar}>
                  {n.bar && <Bar $kind={n.bar} />}
                  <KeyMark color={n.start} plain={n.plain} />
                  {n.end && <KeyMark end color={n.end} />}
                </Track>
              ))}
            </Tracks>
            <BottomBar>
              <ScrollCorner aria-label="Scroll left">
                <svg width="8" height="8" viewBox="0 0 8 8" aria-hidden="true"><path d="M6 3L2 7l4 4" fill="none" stroke="#333" strokeWidth="1.600" /></svg>
              </ScrollCorner>
            </BottomBar>
            <Playhead />
          </Timeline>
        </StudyBody>
      </MotionStudy>
    </Window>
  );
}
